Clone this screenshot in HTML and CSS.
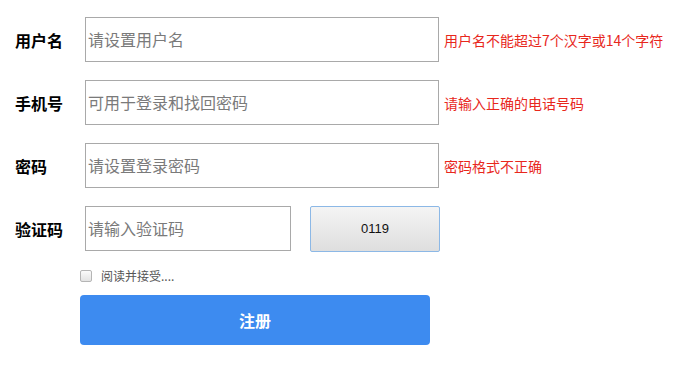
FILE: index.html
```html
<!DOCTYPE html>
<html lang="zh">
<head>
<meta charset="utf-8">
<link rel="stylesheet" href="styles.css">
</head>
<body>
<form class="reg">
  <div class="row">
    <label class="lbl">用户名</label>
    <input class="inp" type="text" placeholder="请设置用户名">
    <span class="err">用户名不能超过7个汉字或14个字符</span>
  </div>
  <div class="row">
    <label class="lbl">手机号</label>
    <input class="inp" type="text" placeholder="可用于登录和找回密码">
    <span class="err">请输入正确的电话号码</span>
  </div>
  <div class="row">
    <label class="lbl">密码</label>
    <input class="inp" type="password" placeholder="请设置登录密码">
    <span class="err">密码格式不正确</span>
  </div>
  <div class="row">
    <label class="lbl">验证码</label>
    <input class="inp inp-code" type="text" placeholder="请输入验证码">
    <button class="code" type="button">0119</button>
  </div>
  <div class="agree">
    <span class="box"></span>
    <span class="agree-text">阅读并接受....</span>
  </div>
  <button class="submit" type="button">注册</button>
</form>
</body>
</html>
```

FILE: styles.css
```css
html, body {
  margin: 0;
  padding: 0;
  background: #fff;
}
body {
  font-family: "Noto Sans CJK SC", "Liberation Sans", sans-serif;
}
.reg {
  padding: 17px 0 0 15px;
  display: flex;
  flex-direction: column;
}
.row {
  display: flex;
  align-items: center;
  height: 45px;
  margin-bottom: 18px;
}
.lbl {
  width: 70px;
  font-size: 16px;
  line-height: 1;
  font-weight: bold;
  color: #000;
  flex-shrink: 0;
}
.inp {
  box-sizing: border-box;
  width: 354px;
  height: 45px;
  border: 1px solid #a9a9a9;
  padding: 0 2px 2px;
  margin: 0;
  font-size: 16px;
  font-family: "Noto Sans CJK SC", sans-serif;
  outline: none;
}
.inp::placeholder {
  color: #7a7a7a;
}
.inp-code {
  width: 206px;
}
.err {
  margin-left: 5px;
  font-size: 14px;
  line-height: 1;
  color: #e8271c;
  white-space: nowrap;
}
.code {
  box-sizing: border-box;
  margin-left: 19px;
  width: 130px;
  height: 46px;
  border: 1px solid #8cb8e6;
  border-radius: 2px;
  background: linear-gradient(#f4f4f4, #dedede);
  font-family: "Liberation Sans", sans-serif;
  font-size: 13px;
  color: #111;
  padding: 0;
}
.agree {
  display: flex;
  align-items: center;
  height: 16px;
  margin: -1px 0 0 65px;
}
.box {
  box-sizing: border-box;
  width: 12px;
  height: 12px;
  border: 1px solid #b5b5b5;
  border-radius: 2px;
  background: linear-gradient(#fbfbfb, #e3e3e3);
}
.agree-text {
  margin-left: 9px;
  font-size: 12px;
  line-height: 1;
  color: #555;
}
.submit {
  margin: 11px 0 0 65px;
  width: 350px;
  height: 50px;
  border: none;
  border-radius: 4px;
  background: #3d8bf0;
  color: #fff;
  font-family: "Noto Sans CJK SC", sans-serif;
  font-size: 16px;
  font-weight: bold;
  padding: 0;
}
```
